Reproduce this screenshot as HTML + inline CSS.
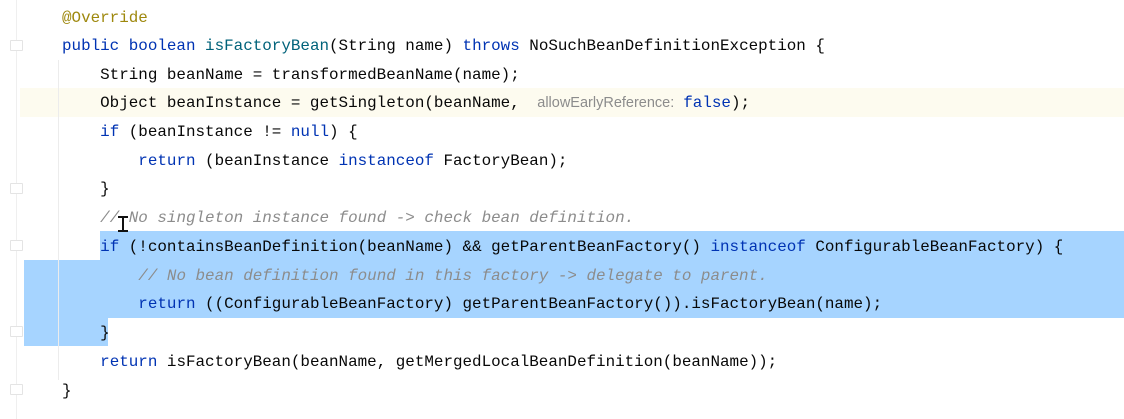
<!DOCTYPE html>
<html><head><meta charset="utf-8"><style>
body{margin:0;width:1124px;height:419px;background:#fff;position:relative;overflow:hidden}
.l{position:absolute;left:62px;height:29px;line-height:29px;font-family:"Liberation Mono",monospace;font-size:15.9px;color:#080808;white-space:pre}
.k{color:#0033b3}.m{color:#00627a}.a{color:#9e880d}.c{color:#8c8c8c;font-style:italic}
.h{display:inline-block;width:154px;font-family:"Liberation Sans",sans-serif;font-size:14.5px;color:#8c8c8c;font-style:normal;text-indent:8px}
.bg{position:absolute}
.fold{position:absolute;left:10px;width:11px;height:9px;border:1px solid #e4e4e4;border-radius:1px;background:#fff}
</style></head><body>
<div class="bg" style="left:16px;top:0;width:1px;height:419px;background:#efefef"></div>
<div class="bg" style="left:20px;top:88px;width:1104px;height:29px;background:#fdfbef"></div>
<div class="bg" style="left:100px;top:231px;width:1024px;height:29px;background:#a6d4ff"></div>
<div class="bg" style="left:24px;top:260px;width:1100px;height:58px;background:#a6d4ff"></div>
<div class="bg" style="left:24px;top:318px;width:84px;height:28px;background:#a6d4ff"></div>
<div class="bg" style="left:58px;top:60px;width:1px;height:320px;background:#ececec"></div>
<div class="fold" style="top:40px"></div>
<div class="fold" style="top:183px"></div>
<div class="fold" style="top:240px"></div>
<div class="fold" style="top:326px"></div>
<div class="fold" style="top:384px"></div>
<div class="l" style="top:4px"><span class="a">@Override</span></div>
<div class="l" style="top:32px"><span class="k">public boolean </span><span class="m">isFactoryBean</span>(String name) <span class="k">throws</span> NoSuchBeanDefinitionException {</div>
<div class="l" style="top:61px">    String beanName = transformedBeanName(name);</div>
<div class="l" style="top:89px">    Object beanInstance = getSingleton(beanName, <span class="h">allowEarlyReference:</span><span class="k">false</span>);</div>
<div class="l" style="top:118px">    <span class="k">if</span> (beanInstance != <span class="k">null</span>) {</div>
<div class="l" style="top:147px">        <span class="k">return</span> (beanInstance <span class="k">instanceof</span> FactoryBean);</div>
<div class="l" style="top:175px">    }</div>
<div class="l" style="top:204px">    <span class="c">// No singleton instance found -&gt; check bean definition.</span></div>
<div class="l" style="top:233px">    <span class="k">if</span> (!containsBeanDefinition(beanName) &amp;&amp; getParentBeanFactory() <span class="k">instanceof</span> ConfigurableBeanFactory) {</div>
<div class="l" style="top:262px">        <span class="c">// No bean definition found in this factory -&gt; delegate to parent.</span></div>
<div class="l" style="top:290px">        <span class="k">return</span> ((ConfigurableBeanFactory) getParentBeanFactory()).isFactoryBean(name);</div>
<div class="l" style="top:319px">    }</div>
<div class="l" style="top:348px">    <span class="k">return</span> isFactoryBean(beanName, getMergedLocalBeanDefinition(beanName));</div>
<div class="l" style="top:377px">}</div>
<div class="bg" style="left:122px;top:216px;width:2px;height:16px;background:#111"></div>
<div class="bg" style="left:118px;top:216px;width:10px;height:2px;background:#111"></div>
<div class="bg" style="left:118px;top:230px;width:10px;height:2px;background:#111"></div>
</body></html>
